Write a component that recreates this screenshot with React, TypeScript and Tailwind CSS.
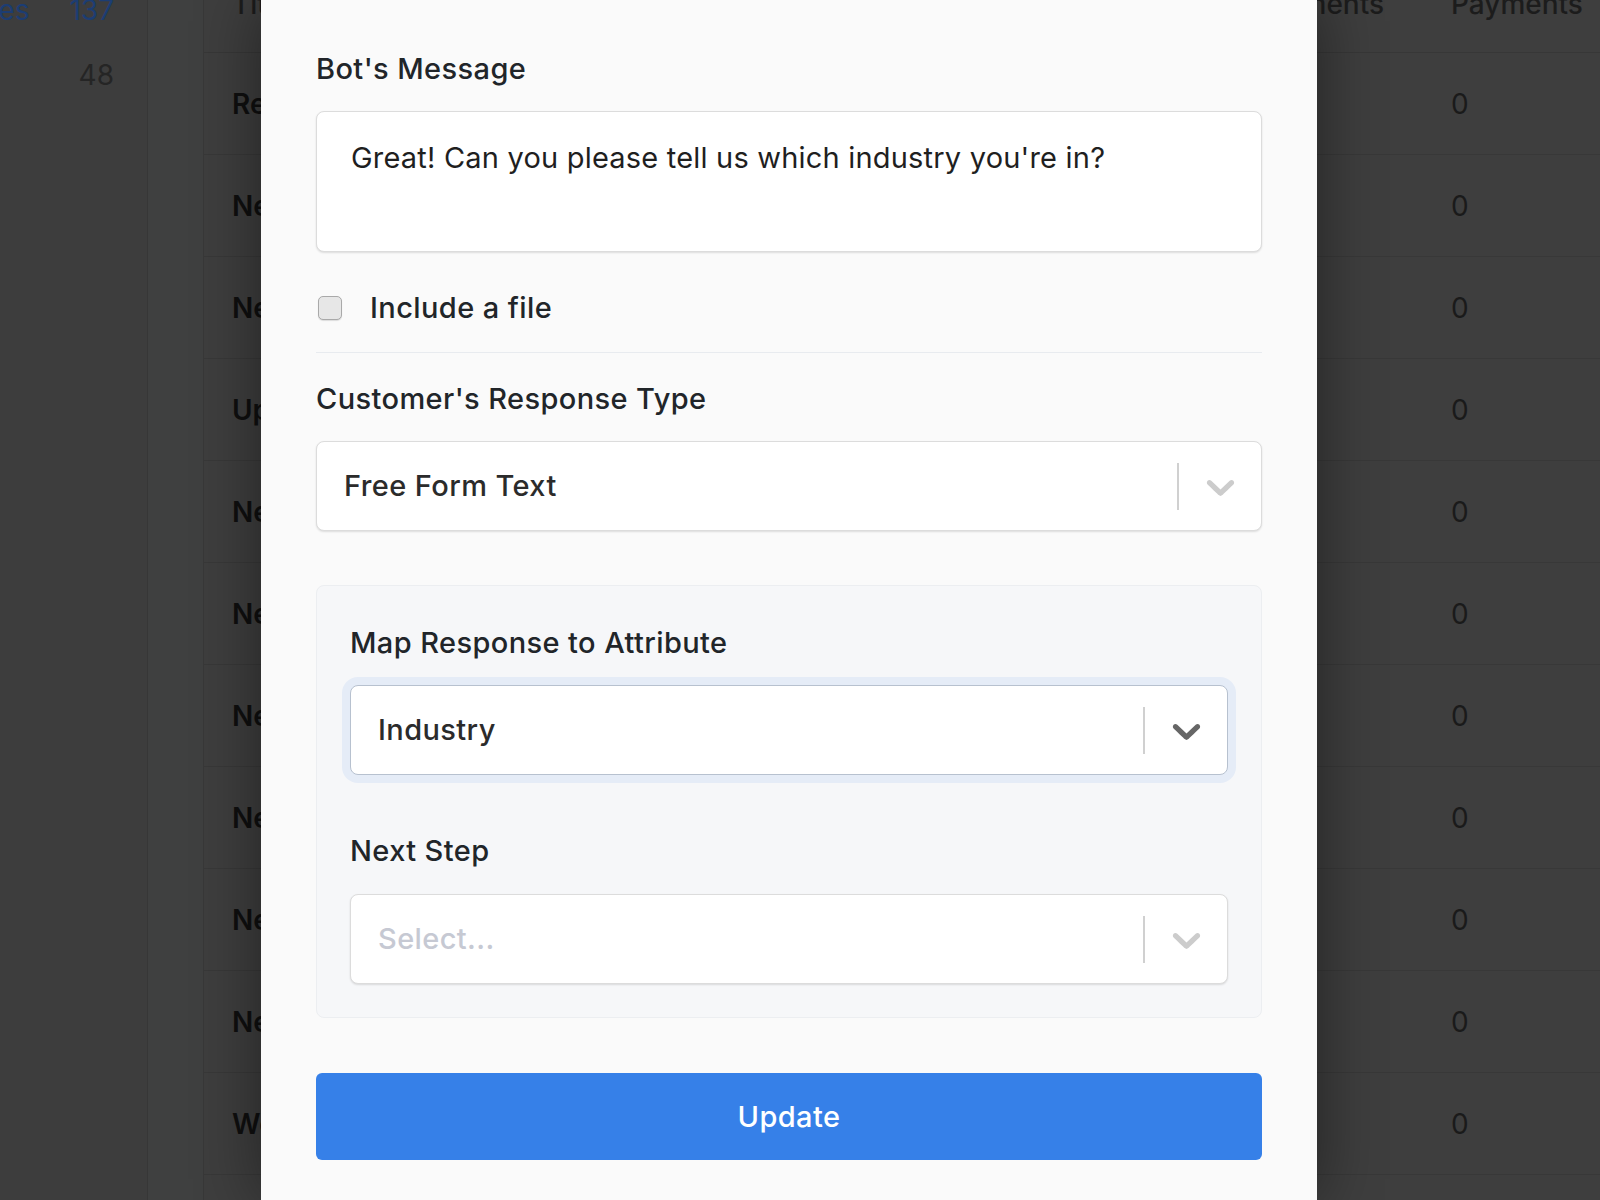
import React from 'react'

const rows = [
  'Request a demo',
  'New visitor welcome',
  'Newsletter signup',
  'Upgrade to premium',
  'New lead qualification',
  'New pricing question',
  'New support ticket',
  'New trial signup',
  'New partner inquiry',
  'New event registration',
  'Welcome back message',
]

const Chevron = ({ color }: { color: string }) => (
  <svg width="47" height="47" viewBox="0 0 20 20" fill={color} aria-hidden="true">
    <path d="M4.516 7.548c0.436-0.446 1.043-0.481 1.576 0l3.908 3.747 3.908-3.747c0.533-0.481 1.141-0.446 1.574 0 0.436 0.445 0.408 1.197 0 1.615-0.406 0.418-4.695 4.502-4.695 4.502-0.217 0.223-0.502 0.335-0.787 0.335s-0.57-0.112-0.789-0.335c0 0-4.287-4.084-4.695-4.502s-0.436-1.17 0-1.615z" />
  </svg>
)

interface SelectProps {
  value?: string
  placeholder?: string
  focused?: boolean
}

const SelectBox = ({ value, placeholder, focused }: SelectProps) => (
  <div
    className={
      focused
        ? 'flex h-[90px] items-center rounded-[8px] border border-[#b7c1cf] bg-white shadow-[0_0_0_8px_#e5ecf7,0_2px_3px_rgba(0,0,0,0.18)]'
        : 'flex h-[90px] items-center rounded-[8px] border border-[#dcdcdc] bg-white shadow-[0_1px_2px_rgba(0,0,0,0.12)]'
    }
  >
    <div className="flex-1 pl-[27px] text-[29px] font-medium leading-[34px] tracking-[0.4px]">
      {value ? (
        <span className="text-[#2b2b2b]">{value}</span>
      ) : (
        <span className="text-[#c6c9d3]">{placeholder}</span>
      )}
    </div>
    <div className="h-[47px] w-[2px] bg-[#d0d0d0]" />
    <div className="flex w-[82px] items-center justify-center">
      <Chevron color={focused ? '#666666' : '#cccccc'} />
    </div>
  </div>
)

const Label = ({ children }: { children: React.ReactNode }) => (
  <div className="text-[29px] font-medium leading-[34px] tracking-[0.4px] text-[#212529]">{children}</div>
)

const Page = () => (
  <div className="flex h-[1200px] w-[1600px] overflow-hidden bg-[#3e3e3e]">
    <div className="w-[148px] shrink-0 overflow-hidden border-r border-[#373737] bg-[#3d3d3d] text-[28px] leading-[34px]">
      <div className="-mt-[7px] flex justify-end gap-[40px] pr-[33px] text-[#1c3d73]">
        <span className="whitespace-nowrap">Messages</span>
        <span>137</span>
      </div>
      <div className="mt-[31px] flex justify-end pr-[33px] text-[#252525]">48</div>
    </div>
    <div className="w-[55px] shrink-0 bg-[#3f4040]" />
    <div className="flex-1 border-l border-[#383838] text-[28px] leading-[34px]">
      <div className="h-[53px] overflow-hidden border-b border-[#373737]">
        <div className="-mt-[13px] grid grid-cols-[983px_236px_1fr] pl-[28px] font-medium text-[#1c1c1c]">
          <span>Title</span>
          <span>Attachments</span>
          <span>Payments</span>
        </div>
      </div>
      {rows.map((r) => (
        <div
          key={r}
          className="grid h-[102px] grid-cols-[983px_236px_1fr] items-center border-b border-[#383838] pl-[28px]"
        >
          <span className="font-semibold text-[#0f0f0f]">{r}</span>
          <span className="text-[#1a1a1a]">0</span>
          <span className="text-[#1a1a1a]">0</span>
        </div>
      ))}
    </div>
  </div>
)

const App = () => (
  <div className="relative h-[1200px] w-[1600px] overflow-hidden font-['Inter',sans-serif]">
    <Page />
    <div className="absolute left-[261px] top-0 h-[1200px] w-[1056px] bg-[#fafafa] px-[55px] pt-[52px] shadow-[0_0_60px_rgba(0,0,0,0.45)]">
      <Label>Bot's Message</Label>
      <textarea
        className="mt-[25px] block h-[141px] w-full resize-none rounded-[8px] border border-[#dcdcdc] bg-white px-[34px] pt-[29px] text-[29px] leading-[34px] tracking-[0.2px] text-[#1f1f1f] shadow-[0_1px_2px_rgba(0,0,0,0.12)] outline-none"
        defaultValue="Great! Can you please tell us which industry you're in?"
      />
      <div className="mt-[39px] flex items-center">
        <div className="ml-[2px] h-[24px] w-[24px] rounded-[5px] border border-[#a9a9a9] bg-[#e7e7e7] shadow-[0_1px_1px_rgba(0,0,0,0.12)]" />
        <span className="ml-[28px] text-[29px] font-medium leading-[34px] tracking-[0.4px] text-[#212529]">Include a file</span>
      </div>
      <div className="mt-[27px] h-px bg-[#e8ebef]" />
      <div className="mt-[29px]">
        <Label>Customer's Response Type</Label>
      </div>
      <div className="mt-[25px]">
        <SelectBox value="Free Form Text" />
      </div>
      <div className="mt-[54px] rounded-[8px] border border-[#eceef1] bg-[#f6f7f9] px-[33px] pb-[33px] pt-[40px]">
        <Label>Map Response to Attribute</Label>
        <div className="mt-[25px]">
          <SelectBox value="Industry" focused />
        </div>
        <div className="mt-[59px]">
          <Label>Next Step</Label>
        </div>
        <div className="mt-[26px]">
          <SelectBox placeholder="Select..." />
        </div>
      </div>
      <button className="mt-[55px] flex h-[87px] w-full items-center justify-center rounded-[6px] bg-[#3680e8] text-[29px] font-medium tracking-[0.4px] text-white">
        Update
      </button>
    </div>
  </div>
)

export default App
